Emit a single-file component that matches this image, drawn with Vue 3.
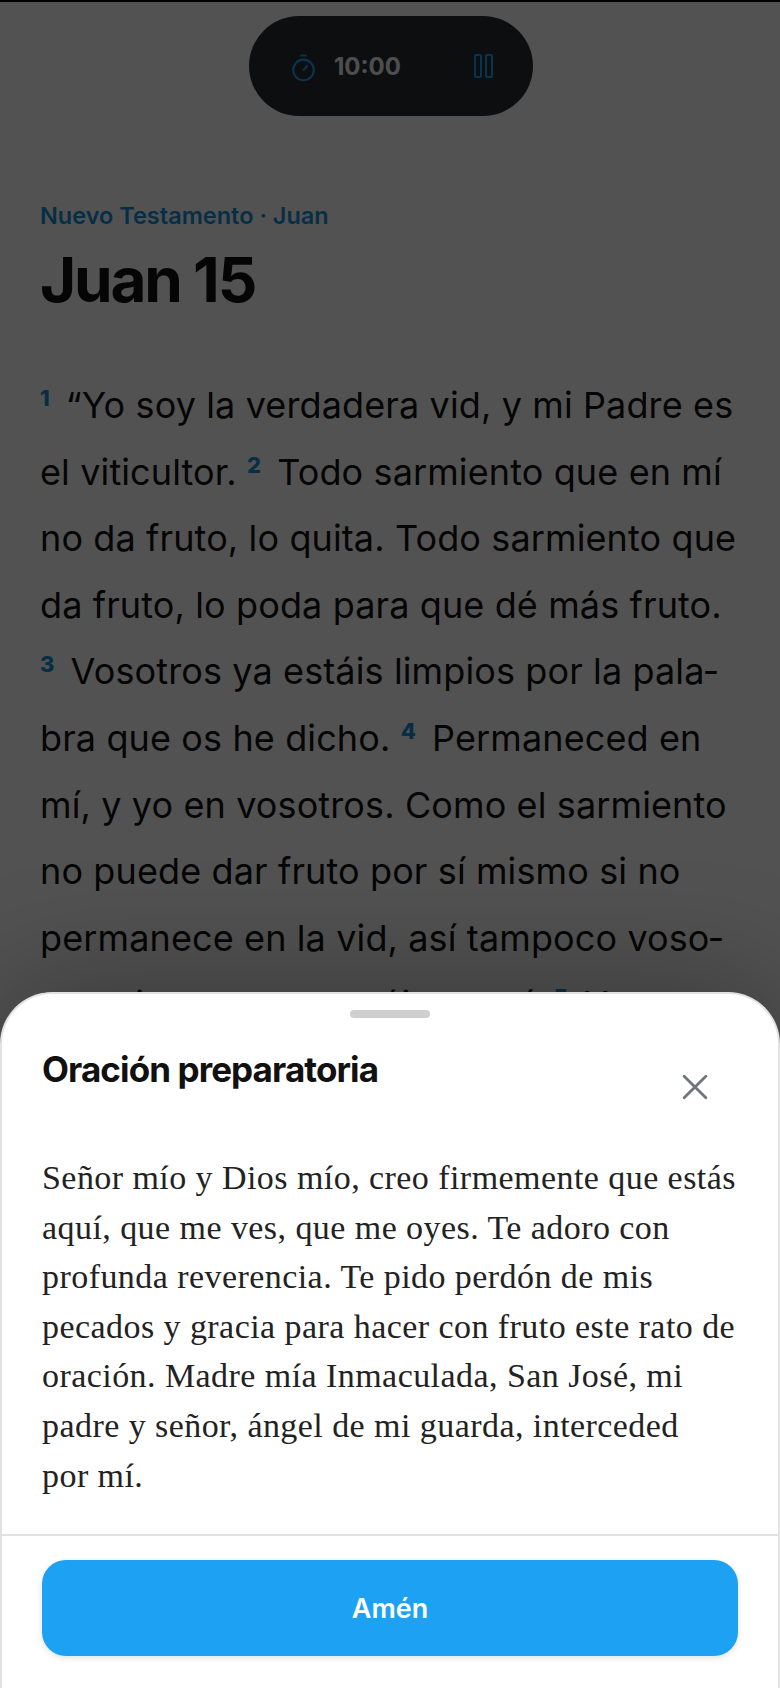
<template>
  <div class="screen">
    <div class="page">
      <div class="timer-pill">
        <svg class="timer-icon" viewBox="0 0 24 24" fill="none" stroke="currentColor" stroke-width="1.7" stroke-linecap="round">
          <path d="M10 2h4" />
          <path d="M12 14l3-3" />
          <circle cx="12" cy="14" r="8.5" />
        </svg>
        <span class="timer-time">10:00</span>
        <svg class="pause-icon" viewBox="0 0 19 24" fill="none" stroke="currentColor" stroke-width="2">
          <rect x="1" y="1" width="6" height="22" rx="1" />
          <rect x="12" y="1" width="6" height="22" rx="1" />
        </svg>
      </div>

      <p class="kicker">Nuevo Testamento · Juan</p>
      <h1 class="title">Juan 15</h1>

      <p class="verses">
        <template v-for="v in verses" :key="v.n">
          <sup class="num">{{ v.n }}</sup>{{ v.text + ' ' }}
        </template>
      </p>
    </div>

    <div class="backdrop"></div>

    <div class="sheet">
      <div class="handle"></div>
      <div class="sheet-head">
        <h2 class="sheet-title">Oración preparatoria</h2>
        <button class="close" aria-label="Cerrar">
          <svg viewBox="0 0 24 24" fill="none" stroke="currentColor" stroke-width="2.6" stroke-linecap="round">
            <path d="M2 2l20 20M22 2L2 22" />
          </svg>
        </button>
      </div>
      <p class="prayer">{{ prayer }}</p>
      <div class="sheet-foot">
        <button class="amen">Amén</button>
      </div>
    </div>
  </div>
</template>

<script setup>
const verses = [
  { n: 1, text: '“Yo soy la verdadera vid, y mi Padre es el viticultor.' },
  { n: 2, text: 'Todo sarmiento que en mí no da fruto, lo quita. Todo sarmiento que da fruto, lo poda para que dé más fruto.' },
  { n: 3, text: 'Vosotros ya estáis limpios por la pala\u00ADbra que os he dicho.' },
  { n: 4, text: 'Permaneced en mí, y yo en vosotros. Como el sarmiento no puede dar fruto por sí mismo si no permanece en la vid, así tampoco voso\u00ADtros si no permanecéis en mí.' },
  { n: 5, text: 'Yo soy la\u00A0vid; vosotros los sarmientos.' }
]

const prayer = 'Señor mío y Dios mío, creo firmemente que estás aquí, que me ves, que me oyes. Te adoro con profunda reverencia. Te pido perdón de mis pecados y gracia para hacer con fruto este rato de oración. Madre mía Inmaculada, San José, mi padre y señor, ángel de mi guarda, interceded por\u00A0mí.'
</script>

<style>
html, body {
  margin: 0;
  background: #fff;
}
</style>

<style scoped>
.screen {
  position: relative;
  width: 780px;
  height: 1688px;
  overflow: hidden;
  background: #fff;
  font-family: Inter, "Liberation Sans", sans-serif;
}
.page {
  height: 100%;
  box-sizing: border-box;
  padding: 16px 38px 0 40px;
  display: flex;
  flex-direction: column;
}
.timer-pill {
  align-self: center;
  width: 284px;
  height: 100px;
  box-sizing: border-box;
  padding: 0 40px 0 40px;
  border-radius: 50px;
  background: #2a2e33;
  display: flex;
  align-items: center;
}
.timer-icon {
  width: 29px;
  height: 29px;
  margin-top: 2px;
  color: #1da1f2;
}
.timer-time {
  margin-left: 16px;
  font-size: 24px;
  font-weight: 700;
  color: #f2f2f2;
}
.pause-icon {
  width: 19px;
  height: 24px;
  margin-left: auto;
  color: #1da1f2;
}
.kicker {
  margin: 86px 0 0;
  font-size: 23.5px;
  line-height: 28px;
  font-weight: 600;
  color: #1a8fd8;
}
.title {
  margin: 12px 0 0;
  font-size: 62px;
  line-height: 76px;
  font-weight: 700;
  letter-spacing: -2.2px;
  color: #111;
}
.verses {
  margin: 54px 0 0;
  font-size: 36px;
  letter-spacing: 0.12px;
  line-height: 66.6px;
  color: #111;
}
.num {
  font-size: 22px;
  font-weight: 800;
  line-height: 0;
  margin-right: 16px;
  color: #1a8fd8;
  vertical-align: 12px;
}
.backdrop {
  position: absolute;
  inset: 0;
  background: rgba(0, 0, 0, 0.68);
  border-top: 2px solid #000;
  box-sizing: border-box;
}
.sheet {
  position: absolute;
  left: 0;
  right: 0;
  bottom: 0;
  height: 696px;
  box-sizing: border-box;
  background: #fff;
  border: 2px solid #e2e2e2;
  border-bottom: 0;
  border-radius: 52px 52px 0 0;
  box-shadow: 0 -8px 120px rgba(0, 0, 0, 0.3);
  display: flex;
  flex-direction: column;
}
.handle {
  align-self: center;
  width: 80px;
  height: 8px;
  margin-top: 16px;
  border-radius: 4px;
  background: #cfcfcf;
}
.sheet-head {
  display: flex;
  justify-content: space-between;
  align-items: flex-start;
  padding: 29px 40px 0 40px;
}
.sheet-title {
  margin: 0;
  font-size: 35px;
  line-height: 44px;
  font-weight: 700;
  letter-spacing: -0.9px;
  color: #111;
}
.close {
  width: 26px;
  height: 26px;
  margin: 27px 30px 0 0;
  padding: 0;
  border: none;
  background: none;
  color: #71767b;
}
.close svg {
  display: block;
  width: 100%;
  height: 100%;
  overflow: visible;
}
.prayer {
  margin: 53px 0 0;
  padding: 0 36px 0 40px;
  font-family: "Liberation Serif", serif;
  font-size: 34px;
  letter-spacing: 0.44px;
  line-height: 49.6px;
  color: #222;
}
.sheet-foot {
  margin-top: 34px;
  border-top: 2px solid #e2e2e2;
  padding: 24px 40px 0;
}
.amen {
  display: block;
  width: 100%;
  height: 96px;
  border: none;
  border-radius: 24px;
  background: #1da1f2;
  color: #fff;
  font-family: Inter, "Liberation Sans", sans-serif;
  font-size: 27px;
  font-weight: 600;
  box-shadow: 0 2px 6px rgba(0, 0, 0, 0.12);
}
</style>
